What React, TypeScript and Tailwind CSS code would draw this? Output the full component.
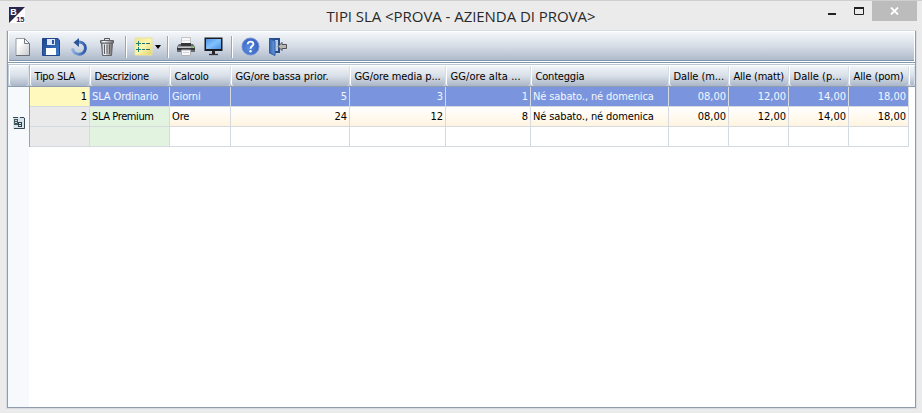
import React from 'react';

const headers = [
  { label: 'Tipo SLA', cell: 'w-[60px]', text: 'tracking-[-0.3px]' },
  { label: 'Descrizione', cell: 'w-[80px]', text: 'tracking-[-0.3px]' },
  { label: 'Calcolo', cell: 'w-[61px]', text: 'tracking-[-0.3px]' },
  { label: 'GG/ore bassa prior.', cell: 'w-[119px]', text: 'tracking-[-0.1px]' },
  { label: 'GG/ore media p...', cell: 'w-[96px]', text: 'tracking-[-0.08px]' },
  { label: 'GG/ore alta ...', cell: 'w-[85px]', text: 'tracking-[0.08px]' },
  { label: 'Conteggia', cell: 'w-[138px]', text: 'tracking-[-0.2px]' },
  { label: 'Dalle (m...', cell: 'w-[60px]', text: 'tracking-[-0.08px]' },
  { label: 'Alle (matt)', cell: 'w-[60px]', text: 'tracking-[-0.2px]' },
  { label: 'Dalle (p...', cell: 'w-[60px]', text: 'tracking-[0.02px]' },
  { label: 'Alle (pom)', cell: 'w-[60px]', text: 'tracking-[-0.12px]' },
];

const rows = [
  ['1', 'SLA Ordinario', 'Giorni', '5', '3', '1', 'Né sabato., né domenica', '08,00', '12,00', '14,00', '18,00'],
  ['2', 'SLA Premium', 'Ore', '24', '12', '8', 'Né sabato., né domenica', '08,00', '12,00', '14,00', '18,00'],
  ['', '', '', '', '', '', '', '', '', '', ''],
];

function cellColor(row: number, col: number) {
  if (row === 0) return col === 0 ? 'bg-[#fff9bd] text-black' : 'bg-[#7a95de] text-[#f4f7ff]';
  if (col === 0) return 'bg-[#eaeaea] text-black';
  if (col === 1) return 'bg-[#e2f4e0] text-black';
  return row === 1 ? 'bg-linear-to-b from-white to-[#fff4e0] text-black' : 'bg-white';
}

function cellText(value: string, col: number) {
  if (value === 'SLA Premium') return 'text-left tracking-[-0.4px]';
  return [1, 2, 6].includes(col) ? 'text-left tracking-[-0.12px]' : 'text-right';
}

function Separator() {
  return <div className="h-[22px] w-[2px] border-l border-[#8fa9c2] bg-white" />;
}

function AppIcon() {
  return (
    <svg width="16" height="16" viewBox="0 0 16 16">
      <rect width="16" height="16" fill="#fff" />
      <path d="M0 0H16L0 16Z" fill="#28284f" />
      <text x="1.2" y="8" fontSize="9" fontWeight="bold" fill="#fff" fontFamily="Liberation Sans, sans-serif">B</text>
      <text x="7.2" y="14.8" fontSize="7.5" fontWeight="bold" fill="#28284f" fontFamily="Liberation Sans, sans-serif">15</text>
    </svg>
  );
}

function NewIcon() {
  return (
    <svg width="16" height="20" viewBox="0 0 16 20">
      <defs><linearGradient id="paper" x2="1" y2="1"><stop offset=".3" stopColor="#fff" /><stop offset="1" stopColor="#c5c6ca" /></linearGradient></defs>
      <path d="M1 1.5H9.5L14.5 6.5V18.5H1Z" fill="url(#paper)" stroke="#9b9da3" />
      <path d="M14.5 6.5V18.5H1" fill="none" stroke="#696d75" />
      <path d="M9.5 1.5V6.5H14.5Z" fill="#f7f7f8" stroke="#777b83" />
    </svg>
  );
}

function SaveIcon() {
  return (
    <svg width="18" height="18" viewBox="0 0 18 18">
      <defs><linearGradient id="disk" x2="1" y2="1"><stop stopColor="#1c4389" /><stop offset="1" stopColor="#3e7ed0" /></linearGradient></defs>
      <path d="M.5.5H16L17.5 2.5V17.5H.5Z" fill="url(#disk)" stroke="#21468b" />
      <path d="M5 1H13V7H5Z" fill="#dce8f7" />
      <path d="M10 2H12V6H10Z" fill="#2355a0" />
      <path d="M4 10H14V17H4Z" fill="#fff" />
    </svg>
  );
}

function UndoIcon() {
  return (
    <svg width="17" height="18" viewBox="0 0 17 18">
      <defs><linearGradient id="undo" x2="1"><stop stopColor="#8db0e2" /><stop offset="1" stopColor="#2b5aa8" /></linearGradient></defs>
      <path d="M6 4.2C11 3.2 14.6 6 14.4 10.4C14.1 14.8 10.2 17 6.2 16C3.4 15.3 1.8 13.4 1.5 10.5" fill="none" stroke="url(#undo)" strokeWidth="2.8" />
      <path d="M2.5 4.5L8 0V9Z" fill="#2c5699" />
    </svg>
  );
}

function TrashIcon() {
  return (
    <svg width="16" height="20" viewBox="0 0 16 20">
      <defs><linearGradient id="can"><stop stopColor="#888" /><stop offset=".25" stopColor="#fff" /><stop offset=".6" stopColor="#bbb" /><stop offset="1" stopColor="#666" /></linearGradient></defs>
      <path d="M5.5 3V1.5H10.5V3" fill="none" stroke="#555" />
      <path d="M2.5 6H13.5L12.5 18.5H3.5Z" fill="url(#can)" stroke="#60636a" />
      <path d="M1.5 3.5H14.5V6H1.5Z" fill="url(#can)" stroke="#60636a" />
      <path d="M5.5 7.5V17M8 7.5V17M10.5 7.5V17" stroke="#5e6066" />
    </svg>
  );
}

function ListIcon() {
  return (
    <svg width="19" height="19" viewBox="0 0 19 19">
      <defs><linearGradient id="note" x2="1" y2="1"><stop stopColor="#eee493" /><stop offset=".5" stopColor="#fcf7b0" /><stop offset="1" stopColor="#dfd06a" /></linearGradient></defs>
      <path d="M1 1H18V18H1Z" fill="url(#note)" stroke="#ece496" />
      <path d="M4.5 4V9M2 6.5H7M4.5 10V15M2 12.5H7" stroke="#1f7f74" />
      <path d="M8 6.5H11M12 6.5H16M8 12.5H11M12 12.5H16" stroke="#2f6f68" strokeWidth="1.2" />
    </svg>
  );
}

function PrinterIcon() {
  return (
    <svg width="18" height="19" viewBox="0 0 18 19">
      <path d="M4.5 .5H13.5V7H4.5Z" fill="#f7f7f7" stroke="#c4c5c9" />
      <path d="M5 3.5H13" stroke="#e2e3e7" />
      <path d="M2 7H16L18 10V15H0V10Z" fill="#6a6b6f" />
      <path d="M4 6H14V9H4Z" fill="#36373b" />
      <path d="M1 9.5H17V11H1Z" fill="#c3c4c6" />
      <path d="M0 12H18" stroke="#202124" strokeWidth="1.4" />
      <path d="M14 10.5H16" stroke="#76cf47" />
      <path d="M4.5 13H13.5V18.5H4.5Z" fill="#f9f9fb" stroke="#b1b2b7" />
      <path d="M6 15.5H12" stroke="#d2d3d7" />
    </svg>
  );
}

function MonitorIcon() {
  return (
    <svg width="19" height="19" viewBox="0 0 19 19">
      <defs><linearGradient id="screen" x2="1" y2="1"><stop stopColor="#4c94ea" /><stop offset=".5" stopColor="#83c2fc" /><stop offset="1" stopColor="#4a91e8" /></linearGradient></defs>
      <path d="M.5.5H18.5V14H.5Z" fill="#1b1c20" />
      <path d="M2 2H17V12H2Z" fill="url(#screen)" />
      <path d="M8 14H11V17H8Z" fill="#26272a" />
      <path d="M5 17.5H14" stroke="#303136" strokeWidth="1.3" />
    </svg>
  );
}

function HelpIcon() {
  return (
    <svg width="19" height="19" viewBox="0 0 19 19">
      <defs><radialGradient id="help" cx=".4" cy=".6"><stop stopColor="#5a8fe4" /><stop offset="1" stopColor="#3e69c4" /></radialGradient></defs>
      <circle cx="9.5" cy="9.5" r="8.5" fill="url(#help)" stroke="#7390d6" />
      <path d="M6.7 7.3C6.7 3.6 12.7 3.8 12.4 7.2C12.2 9.1 9.5 9.1 9.5 11.8" fill="none" stroke="#fff" strokeWidth="1.8" />
      <circle cx="9.5" cy="14.2" r="1.2" fill="#fff" />
    </svg>
  );
}

function ExitIcon() {
  return (
    <svg width="20" height="20" viewBox="0 0 20 20">
      <defs><linearGradient id="door"><stop stopColor="#3465b2" /><stop offset="1" stopColor="#6b9bda" /></linearGradient></defs>
      <path d="M1 1H12V16H1Z" fill="#274c8c" />
      <path d="M7 3H10V14H7Z" fill="#b9cae3" />
      <path d="M1.5 1.5L7 4V18.5L1.5 16Z" fill="url(#door)" stroke="#2f5ba4" />
      <path d="M10 9.5L14 5.5V7.5H18.5V11.5H14V13.5Z" fill="#bab8b1" stroke="#505255" />
    </svg>
  );
}

function RecordIcon() {
  return (
    <svg width="12" height="12" viewBox="0 0 12 12">
      <path d="M0 0H12V12H0Z" fill="#d9e3e9" />
      <path d="M0 .5H5M7 .5H11" stroke="#334851" />
      <path d="M1 2H5V8H1Z" fill="#405760" />
      <path d="M2 3.5H4M2 5.5H4" stroke="#c6d7dd" />
      <path d="M5 5H9V10H5Z" fill="#2d424c" />
      <path d="M6 6.5H8M6 8.5H8" stroke="#e5edf0" />
      <path d="M11.5 1V11.5H1" fill="none" stroke="#344a54" />
    </svg>
  );
}

const headerSurface = 'rounded-b-[3px] border-l border-t border-white bg-linear-to-b from-[#f2f5f8] via-[#d9dfe8] to-[#a9b5c7] shadow-[inset_-1px_0_0_#d7dfe8]';

export default function App() {
  return (
    <main className="flex h-[413px] w-[922px] flex-col overflow-hidden border-t border-[#cfcfcf] bg-[#ebebeb] font-['DejaVu_Sans_Condensed','DejaVu_Sans',sans-serif] text-[11px] text-black">
      <header className="flex h-[29px] shrink-0">
        <div className="w-[82px] pl-[9px] pt-[6px]"><AppIcon /></div>
        <h1 className="flex-1 pt-[4px] text-center font-['Open_Sans','Noto_Sans',sans-serif] text-[15px] leading-[22px] tracking-[-0.05px] text-[#292929]">
          <span className="inline-block whitespace-nowrap">TIPI SLA &lt;PROVA - AZIENDA DI PROVA&gt;</span>
        </h1>
        <div className="flex w-[82px]">
          <svg className="-ml-[18px] shrink-0" width="60" height="20" viewBox="0 0 60 20">
            <path d="M6 13H14" stroke="#222" strokeWidth="2" />
            <path d="M32.5 7V13.5H41.5V7" fill="none" stroke="#222" />
            <path d="M32 7H42" stroke="#222" strokeWidth="2" />
          </svg>
          <div className="flex h-5 w-[45px] -ml-[10px] shrink-0 items-center justify-center bg-[#bcbcbc]">
            <svg width="9" height="8" viewBox="0 0 9 8"><path d="M1 .5L8 7.5M8 .5L1 7.5" stroke="#fff" strokeWidth="1.8" /></svg>
          </div>
        </div>
      </header>
      <section className="ml-[6px] flex h-[379px] w-[911px] flex-col border border-[#d7dde3]">
        <div className="flex min-h-0 flex-1 flex-col border border-t-0 border-[#8f9dab] bg-white">
          <div className="flex h-[30px] shrink-0 items-center border border-b-0 border-white bg-linear-to-b from-[#f4f7fa] via-[#d5dce6] to-[#acb8ca] pl-[6px] shadow-[inset_0_-1px_0_#8298ad]">
            <NewIcon />
            <div className="ml-[11px]"><SaveIcon /></div>
            <div className="ml-[11px]"><UndoIcon /></div>
            <div className="ml-[11px]"><TrashIcon /></div>
            <div className="ml-[10px]"><Separator /></div>
            <div className="ml-[7px]"><ListIcon /></div>
            <svg className="ml-[2px]" width="6" height="4"><path d="M0 0H6L3 4Z" fill="#000" /></svg>
            <div className="ml-[6px]"><Separator /></div>
            <div className="ml-[8px]"><PrinterIcon /></div>
            <div className="ml-[9px]"><MonitorIcon /></div>
            <div className="ml-[8px]"><Separator /></div>
            <div className="ml-[8px]"><HelpIcon /></div>
            <div className="ml-[8px]"><ExitIcon /></div>
          </div>
          <div className="mt-px flex min-h-0 flex-1 flex-col border-t border-[#8298ad]">
            <div className="flex h-[24px] shrink-0 border-b border-[#8e9db1] border-t border-t-white bg-[#bcc8d5] pl-px pt-px">
              <div className={`w-5 ${headerSurface}`} />
              <div className="w-px bg-[#a8b5c5]" />
              {headers.map((header) => (
                <div key={header.label} className={`${header.cell} shrink-0 overflow-hidden whitespace-nowrap pl-[3.5px] pt-[4px] leading-[14px] ${headerSurface} ${header.text}`}>{header.label}</div>
              ))}
              <div className={`flex-1 ${headerSurface}`} />
            </div>
            <div className="flex min-h-0 flex-1">
              <div className="flex w-[21px] shrink-0 flex-col bg-[#f7fafd] pl-[5px] pt-[30px]"><RecordIcon /></div>
              <div className="h-[60px] border-l border-[#95a3b8]">
                {rows.map((row, rowIndex) => (
                  <div key={rowIndex} className="flex h-5">
                    {row.map((value, col) => (
                      <div key={col} className={`${headers[col].cell} shrink-0 overflow-hidden whitespace-nowrap border-r border-b border-[#d5dae1] px-[2px] pt-[3px] leading-[14px] ${cellColor(rowIndex, col)} ${cellText(value, col)}`}>{value}</div>
                    ))}
                  </div>
                ))}
              </div>
            </div>
          </div>
        </div>
      </section>
    </main>
  );
}
